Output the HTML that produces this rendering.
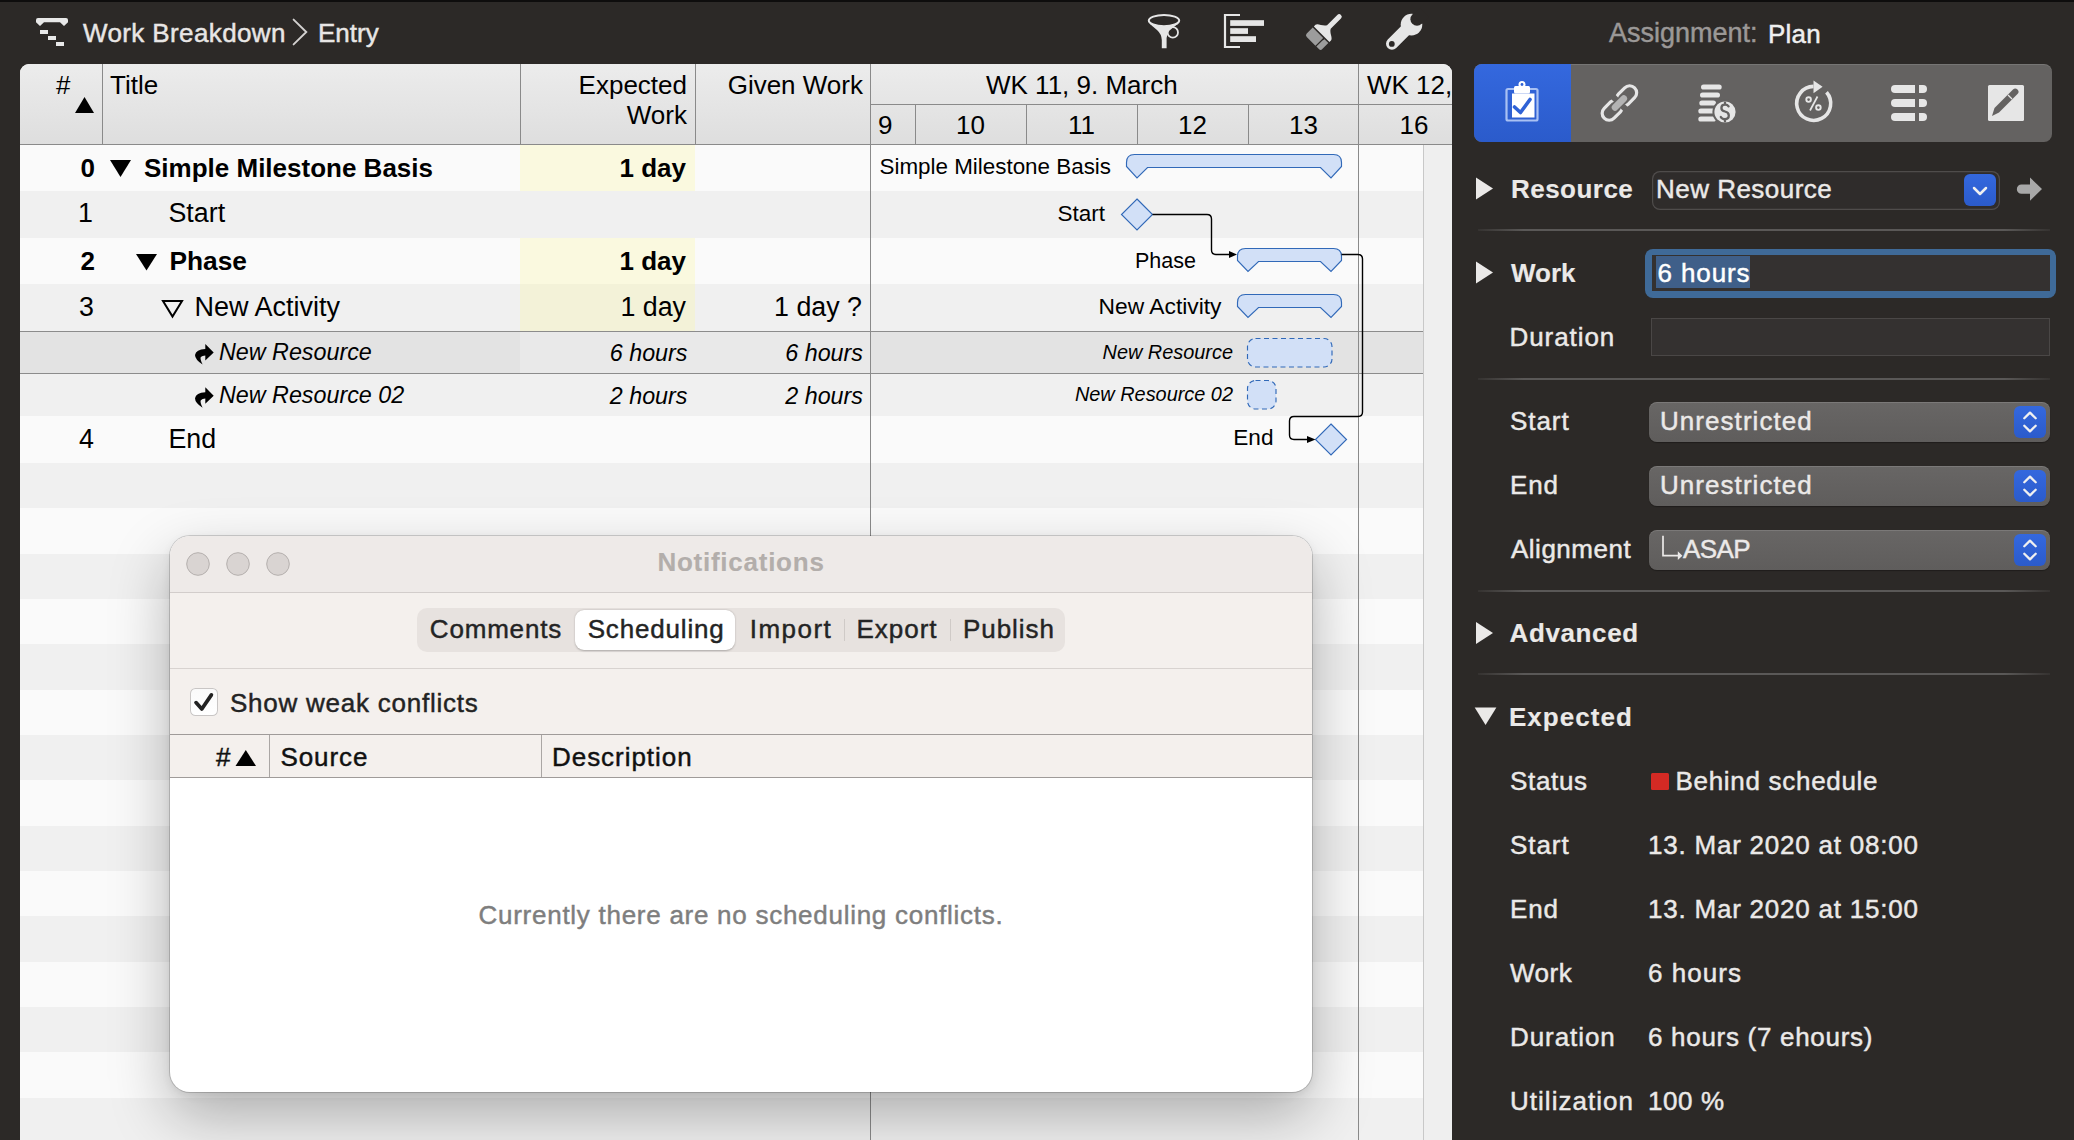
<!DOCTYPE html><html><head><meta charset="utf-8"><style>
html,body{margin:0;padding:0;}
body{width:2074px;height:1140px;overflow:hidden;position:relative;background:#2c2927;font-family:"Liberation Sans", sans-serif;}
.t{position:absolute;white-space:nowrap;}
.r{position:absolute;}
svg{position:absolute;overflow:visible;}
</style></head><body>
<div class="r" style="left:0px;top:0px;width:2074px;height:2px;background:#0e0d0d;"></div>
<svg style="left:0;top:0" width="2074" height="64">
<path d="M36 20 Q36 18 38 18 H66 Q68 18 68 20 V22.3 L64 26 L60 22.2 H44 L40 26 L36 22.3 Z" fill="#e8e8e8"/>
<rect x="40" y="30" width="8" height="4" fill="#e8e8e8"/>
<rect x="48" y="36" width="8" height="4" fill="#e8e8e8"/>
<rect x="56" y="42" width="8" height="4" fill="#e8e8e8"/>
</svg>
<div class="t" style="left:83px;top:20.49px;font-size:26px;line-height:26px;color:#e8e6e5;font-weight:normal;font-style:normal;letter-spacing:0.38px;-webkit-text-stroke:0.45px #e8e6e5;">Work Breakdown</div>
<svg style="left:0;top:0" width="2074" height="64"><path d="M293.6 19.6 L306.3 32 L293.6 44.4" stroke="#d3d1d0" stroke-width="1.9" fill="none" stroke-linecap="round"/></svg>
<div class="t" style="left:318px;top:20.49px;font-size:26px;line-height:26px;color:#e8e6e5;font-weight:normal;font-style:normal;-webkit-text-stroke:0.45px #e8e6e5;">Entry</div>
<svg style="left:0;top:0" width="2074" height="64">
<!-- funnel -->
<ellipse cx="1164" cy="20.6" rx="15.2" ry="5.6" fill="none" stroke="#e6e6e6" stroke-width="2"/>
<path d="M1149.5 23.5 Q1152 26 1157 30 Q1161.5 34 1161.8 40 V48.2 H1166.6 V38 Q1167 34 1169 31 Q1175 25.5 1178.8 23.5 Q1164 28.5 1149.5 23.5 Z" fill="#e6e6e6"/>
<circle cx="1172.8" cy="32.4" r="5.2" fill="none" stroke="#e6e6e6" stroke-width="1.8"/>
<!-- gantt -->
<path d="M1240 15 H1225 V47 H1240" fill="none" stroke="#e6e6e6" stroke-width="2.2"/>
<rect x="1230.2" y="20.2" width="33.8" height="5.7" fill="#e6e6e6"/>
<rect x="1230.2" y="28.2" width="17.8" height="5.7" fill="#e6e6e6"/>
<rect x="1230.2" y="36.2" width="25.8" height="5.8" fill="#e6e6e6"/>
<!-- brush -->
<g transform="translate(1321.1 34.75) rotate(45)">
<path d="M-11 -0.8 H11 V-3 C11 -6 4.5 -7 2.6 -11 V-25.5 A2.6 2.6 0 0 0 -2.6 -25.5 V-11 C-4.5 -7 -11 -6 -11 -3 Z" fill="#e6e6e6"/>
<path d="M-11 0.8 H3.7 V11.7 H-8.6 Q-11 11.7 -11 9.3 Z" fill="#9c9c9c"/>
<path d="M5 3 L5.6 0.8 H11 V9.3 Q11 11.7 8.6 11.7 H5 Z" fill="#9c9c9c"/>
</g>
<!-- wrench -->
<line x1="1392" y1="43.7" x2="1408" y2="27.8" stroke="#e6e6e6" stroke-width="12" stroke-linecap="round"/>
<circle cx="1411.5" cy="24.6" r="10.8" fill="#e6e6e6"/>
<circle cx="1417" cy="19.2" r="6.6" fill="#2c2927"/>
<path d="M1413 15 L1420 8 L1429 17 L1422 24 Z" fill="#2c2927"/>
<circle cx="1391.8" cy="43.9" r="2.9" fill="#2c2927"/>
</svg>
<div class="t" style="left:1609px;top:20.14px;font-size:27px;line-height:27px;color:#9b9897;font-weight:normal;font-style:normal;-webkit-text-stroke:0.45px #9b9897;">Assignment:</div>
<div class="t" style="left:1768px;top:20.99px;font-size:26px;line-height:26px;color:#efefef;font-weight:normal;font-style:normal;letter-spacing:0.2px;-webkit-text-stroke:0.45px #efefef;">Plan</div>
<div class="r" style="left:20px;top:64px;width:1432px;height:1096px;background:#fafafa;border-radius:9px 9px 0 0;overflow:hidden">
<div class="r" style="left:0;top:0;width:1432px;height:80px;background:linear-gradient(#ececec,#dedede)"></div>
<div class="r" style="left:0;top:80px;width:1432px;height:1px;background:#8a8a8a"></div>
</div>
<div class="r" style="left:20px;top:145.00px;width:1432px;height:46.00px;background:#fafafa"></div>
<div class="r" style="left:20px;top:191.00px;width:1432px;height:47.00px;background:#f0f0f0"></div>
<div class="r" style="left:20px;top:238.00px;width:1432px;height:46.00px;background:#fafafa"></div>
<div class="r" style="left:20px;top:284.00px;width:1432px;height:47.00px;background:#f0f0f0"></div>
<div class="r" style="left:20px;top:331.00px;width:1432px;height:43.00px;background:#e3e3e3"></div>
<div class="r" style="left:20px;top:374.00px;width:1432px;height:42.00px;background:#f0f0f0"></div>
<div class="r" style="left:20px;top:416.00px;width:1432px;height:47.00px;background:#fafafa"></div>
<div class="r" style="left:20px;top:463.00px;width:1432px;height:45.33px;background:#f0f0f0"></div>
<div class="r" style="left:20px;top:508.33px;width:1432px;height:45.33px;background:#fafafa"></div>
<div class="r" style="left:20px;top:553.66px;width:1432px;height:45.33px;background:#f0f0f0"></div>
<div class="r" style="left:20px;top:598.99px;width:1432px;height:45.33px;background:#fafafa"></div>
<div class="r" style="left:20px;top:644.32px;width:1432px;height:45.33px;background:#f0f0f0"></div>
<div class="r" style="left:20px;top:689.65px;width:1432px;height:45.33px;background:#fafafa"></div>
<div class="r" style="left:20px;top:734.98px;width:1432px;height:45.33px;background:#f0f0f0"></div>
<div class="r" style="left:20px;top:780.31px;width:1432px;height:45.33px;background:#fafafa"></div>
<div class="r" style="left:20px;top:825.64px;width:1432px;height:45.33px;background:#f0f0f0"></div>
<div class="r" style="left:20px;top:870.97px;width:1432px;height:45.33px;background:#fafafa"></div>
<div class="r" style="left:20px;top:916.30px;width:1432px;height:45.33px;background:#f0f0f0"></div>
<div class="r" style="left:20px;top:961.63px;width:1432px;height:45.33px;background:#fafafa"></div>
<div class="r" style="left:20px;top:1006.96px;width:1432px;height:45.33px;background:#f0f0f0"></div>
<div class="r" style="left:20px;top:1052.29px;width:1432px;height:45.33px;background:#fafafa"></div>
<div class="r" style="left:20px;top:1097.62px;width:1432px;height:45.33px;background:#f0f0f0"></div>
<div class="r" style="left:520px;top:331px;width:350px;height:42px;background:#e9e9e9;"></div>
<div class="r" style="left:20px;top:331px;width:1403px;height:1px;background:#8c8c8c;"></div>
<div class="r" style="left:20px;top:373px;width:1403px;height:1px;background:#8c8c8c;"></div>
<div class="r" style="left:520px;top:145px;width:175px;height:46px;background:#faf9df"></div>
<div class="r" style="left:520px;top:238px;width:175px;height:46px;background:#faf9df"></div>
<div class="r" style="left:520px;top:284px;width:175px;height:47px;background:#f3f2d8"></div>
<div class="r" style="left:1423px;top:145px;width:29px;height:1000px;background:#efefef;"></div>
<div class="r" style="left:1423px;top:145px;width:1px;height:1000px;background:#c8c8c8;"></div>
<div class="r" style="left:102px;top:64px;width:1px;height:80px;background:#8a8a8a;"></div>
<div class="r" style="left:520px;top:64px;width:1px;height:80px;background:#8a8a8a;"></div>
<div class="r" style="left:695px;top:64px;width:1px;height:80px;background:#8a8a8a;"></div>
<div class="r" style="left:870px;top:64px;width:1px;height:80px;background:#8a8a8a;"></div>
<div class="r" style="left:1358px;top:64px;width:1px;height:80px;background:#8a8a8a;"></div>
<div class="r" style="left:870px;top:104px;width:582px;height:1px;background:#8a8a8a;"></div>
<div class="r" style="left:915px;top:104px;width:1px;height:40px;background:#8a8a8a;"></div>
<div class="r" style="left:1026px;top:104px;width:1px;height:40px;background:#8a8a8a;"></div>
<div class="r" style="left:1137px;top:104px;width:1px;height:40px;background:#8a8a8a;"></div>
<div class="r" style="left:1248px;top:104px;width:1px;height:40px;background:#8a8a8a;"></div>
<div class="r" style="left:870px;top:145px;width:1px;height:1000px;background:#8a8a8a;"></div>
<div class="r" style="left:1358px;top:145px;width:1px;height:1000px;background:#8a8a8a;"></div>
<div class="t" style="left:56px;top:71.99px;font-size:26px;line-height:26px;color:#000;font-weight:normal;font-style:normal;">#</div>
<svg style="left:0;top:0" width="2074" height="1140"><path d="M75 113 L84.5 97 L94 113 Z" fill="#000"/></svg>
<div class="t" style="left:110px;top:71.99px;font-size:26px;line-height:26px;color:#000;font-weight:normal;font-style:normal;">Title</div>
<div class="t" style="left:-513px;width:1200px;text-align:right;top:71.99px;font-size:26px;line-height:26px;color:#000;font-weight:normal;font-style:normal;">Expected</div>
<div class="t" style="left:-513px;width:1200px;text-align:right;top:101.99px;font-size:26px;line-height:26px;color:#000;font-weight:normal;font-style:normal;">Work</div>
<div class="t" style="left:-337px;width:1200px;text-align:right;top:71.99px;font-size:26px;line-height:26px;color:#000;font-weight:normal;font-style:normal;">Given Work</div>
<div class="t" style="left:986px;top:71.99px;font-size:26px;line-height:26px;color:#000;font-weight:normal;font-style:normal;">WK 11, 9. March</div>
<div class="t" style="left:1367px;top:71.99px;font-size:26px;line-height:26px;color:#000;font-weight:normal;font-style:normal;">WK 12,</div>
<div class="t" style="left:878px;top:111.99px;font-size:26px;line-height:26px;color:#000;font-weight:normal;font-style:normal;">9</div>
<div class="t" style="left:370.5px;width:1200px;text-align:center;top:111.99px;font-size:26px;line-height:26px;color:#000;font-weight:normal;font-style:normal;">10</div>
<div class="t" style="left:481.5px;width:1200px;text-align:center;top:111.99px;font-size:26px;line-height:26px;color:#000;font-weight:normal;font-style:normal;">11</div>
<div class="t" style="left:592.5px;width:1200px;text-align:center;top:111.99px;font-size:26px;line-height:26px;color:#000;font-weight:normal;font-style:normal;">12</div>
<div class="t" style="left:703.5px;width:1200px;text-align:center;top:111.99px;font-size:26px;line-height:26px;color:#000;font-weight:normal;font-style:normal;">13</div>
<div class="t" style="left:814px;width:1200px;text-align:center;top:111.99px;font-size:26px;line-height:26px;color:#000;font-weight:normal;font-style:normal;">16</div>
<div class="t" style="left:-1105px;width:1200px;text-align:right;top:154.99px;font-size:26px;line-height:26px;color:#000;font-weight:bold;font-style:normal;">0</div>
<svg style="left:0;top:0" width="2074" height="1140"><path d="M110 160 H131 L120.5 177 Z" fill="#000"/><path d="M136 254 H157 L146.5 270.5 Z" fill="#000"/><path d="M163 301 H182 L172.5 316.5 Z" fill="none" stroke="#000" stroke-width="2"/></svg>
<div class="t" style="left:144px;top:154.99px;font-size:26px;line-height:26px;color:#000;font-weight:bold;font-style:normal;">Simple Milestone Basis</div>
<div class="t" style="left:-514px;width:1200px;text-align:right;top:154.99px;font-size:26px;line-height:26px;color:#000;font-weight:bold;font-style:normal;">1 day</div>
<div class="t" style="left:-1107px;width:1200px;text-align:right;top:200.01px;font-size:26.8px;line-height:26.8px;color:#000;font-weight:normal;font-style:normal;">1</div>
<div class="t" style="left:168.5px;top:200.01px;font-size:26.8px;line-height:26.8px;color:#000;font-weight:normal;font-style:normal;">Start</div>
<div class="t" style="left:-1105px;width:1200px;text-align:right;top:248.29px;font-size:26px;line-height:26px;color:#000;font-weight:bold;font-style:normal;">2</div>
<div class="t" style="left:169.5px;top:248.04px;font-size:26.3px;line-height:26.3px;color:#000;font-weight:bold;font-style:normal;">Phase</div>
<div class="t" style="left:-514px;width:1200px;text-align:right;top:248.29px;font-size:26px;line-height:26px;color:#000;font-weight:bold;font-style:normal;">1 day</div>
<div class="t" style="left:-1106px;width:1200px;text-align:right;top:294.21px;font-size:26.8px;line-height:26.8px;color:#000;font-weight:normal;font-style:normal;">3</div>
<div class="t" style="left:194.5px;top:294.04px;font-size:27px;line-height:27px;color:#000;font-weight:normal;font-style:normal;">New Activity</div>
<div class="t" style="left:-514px;width:1200px;text-align:right;top:294.21px;font-size:26.8px;line-height:26.8px;color:#000;font-weight:normal;font-style:normal;">1 day</div>
<div class="t" style="left:-338px;width:1200px;text-align:right;top:294.21px;font-size:26.8px;line-height:26.8px;color:#000;font-weight:normal;font-style:normal;">1 day ?</div>
<div class="t" style="left:219px;top:340.98px;font-size:23.3px;line-height:23.3px;color:#000;font-weight:normal;font-style:italic;">New Resource</div>
<div class="t" style="left:-512.5px;width:1200px;text-align:right;top:341.58px;font-size:23.3px;line-height:23.3px;color:#000;font-weight:normal;font-style:italic;">6 hours</div>
<div class="t" style="left:-337px;width:1200px;text-align:right;top:341.58px;font-size:23.3px;line-height:23.3px;color:#000;font-weight:normal;font-style:italic;">6 hours</div>
<div class="t" style="left:219px;top:384.18px;font-size:23.3px;line-height:23.3px;color:#000;font-weight:normal;font-style:italic;">New Resource 02</div>
<div class="t" style="left:-512.5px;width:1200px;text-align:right;top:384.78px;font-size:23.3px;line-height:23.3px;color:#000;font-weight:normal;font-style:italic;">2 hours</div>
<div class="t" style="left:-337px;width:1200px;text-align:right;top:384.78px;font-size:23.3px;line-height:23.3px;color:#000;font-weight:normal;font-style:italic;">2 hours</div>
<div class="t" style="left:-1106px;width:1200px;text-align:right;top:425.71px;font-size:26.8px;line-height:26.8px;color:#000;font-weight:normal;font-style:normal;">4</div>
<div class="t" style="left:168.5px;top:425.71px;font-size:26.8px;line-height:26.8px;color:#000;font-weight:normal;font-style:normal;">End</div>
<svg style="left:0;top:0" width="2074" height="1140"><g transform="translate(0 0)"><path d="M213.7 352.5 L205.3 344.1 V349 Q196 349.5 195 355 Q195 359.5 202.6 364.6 Q199.8 358.8 200.8 357 Q202.3 355.4 205.3 355.4 V360.6 Z" fill="#000"/></g></svg>
<svg style="left:0;top:0" width="2074" height="1140"><g transform="translate(0 43.2)"><path d="M213.7 352.5 L205.3 344.1 V349 Q196 349.5 195 355 Q195 359.5 202.6 364.6 Q199.8 358.8 200.8 357 Q202.3 355.4 205.3 355.4 V360.6 Z" fill="#000"/></g></svg>
<div class="t" style="left:-89px;width:1200px;text-align:right;top:156.04px;font-size:22.4px;line-height:22.4px;color:#000;font-weight:normal;font-style:normal;">Simple Milestone Basis</div>
<div class="t" style="left:-95px;width:1200px;text-align:right;top:202.65px;font-size:22.5px;line-height:22.5px;color:#000;font-weight:normal;font-style:normal;">Start</div>
<div class="t" style="left:-4px;width:1200px;text-align:right;top:250.50px;font-size:21.5px;line-height:21.5px;color:#000;font-weight:normal;font-style:normal;">Phase</div>
<div class="t" style="left:21.5px;width:1200px;text-align:right;top:294.90px;font-size:22.8px;line-height:22.8px;color:#000;font-weight:normal;font-style:normal;">New Activity</div>
<div class="t" style="left:33px;width:1200px;text-align:right;top:342.55px;font-size:19.9px;line-height:19.9px;color:#000;font-weight:normal;font-style:italic;">New Resource</div>
<div class="t" style="left:33px;width:1200px;text-align:right;top:385.15px;font-size:19.9px;line-height:19.9px;color:#000;font-weight:normal;font-style:italic;">New Resource 02</div>
<div class="t" style="left:73.5px;width:1200px;text-align:right;top:427.17px;font-size:22.6px;line-height:22.6px;color:#000;font-weight:normal;font-style:normal;">End</div>
<svg style="left:0;top:0" width="2074" height="1140"><path d="M1134.5 154.5 H1333.5 Q1341.5 154.5 1341.5 162.5 V166.5 L1331.0 178 L1320.5 167.5 H1147.5 L1137.0 178 L1126.5 166.5 V162.5 Q1126.5 154.5 1134.5 154.5 Z" fill="#d2e0f7" stroke="#3169b8" stroke-width="1.15"/><path d="M1245.5 248.5 H1333.5 Q1341.5 248.5 1341.5 256.5 V260.5 L1331.0 271.5 L1320.5 261.5 H1258.5 L1248.0 271.5 L1237.5 260.5 V256.5 Q1237.5 248.5 1245.5 248.5 Z" fill="#d2e0f7" stroke="#3169b8" stroke-width="1.15"/><path d="M1245.5 294.5 H1333.5 Q1341.5 294.5 1341.5 302.5 V306.5 L1331.0 317.5 L1320.5 307.5 H1258.5 L1248.0 317.5 L1237.5 306.5 V302.5 Q1237.5 294.5 1245.5 294.5 Z" fill="#d2e0f7" stroke="#3169b8" stroke-width="1.15"/><path d="M1137 199 L1152.5 214.5 L1137 230 L1121.5 214.5 Z" fill="#d2e0f7" stroke="#3169b8" stroke-width="1.15"/><path d="M1331 424 L1346.5 439.5 L1331 455 L1315.5 439.5 Z" fill="#d2e0f7" stroke="#3169b8" stroke-width="1.15"/><rect x="1247.5" y="338.5" width="84.5" height="28.5" rx="8" fill="#d2e0f7" stroke="#3169b8" stroke-width="1.15" stroke-dasharray="5 3.5"/><rect x="1247.5" y="380.5" width="28.5" height="28.5" rx="8" fill="#d2e0f7" stroke="#3169b8" stroke-width="1.15" stroke-dasharray="5 3.5"/><path d="M1152.5 214.5 H1207 Q1211.5 214.5 1211.5 219 V250 Q1211.5 254.5 1216 254.5 H1230" fill="none" stroke="#000" stroke-width="1.4"/><path d="M1229 251 L1237 254.5 L1229 258 Z" fill="#000"/><path d="M1341.5 254.5 H1358 Q1362.5 254.5 1362.5 259 V412 Q1362.5 416.5 1358 416.5 H1294 Q1289.5 416.5 1289.5 421 V435 Q1289.5 439.5 1294 439.5 H1308" fill="none" stroke="#000" stroke-width="1.4"/><path d="M1307 436 L1315.5 439.5 L1307 443 Z" fill="#000"/></svg>
<div class="r" style="left:170px;top:536px;width:1142px;height:556px;border-radius:20px;box-shadow:0 0 0 1px rgba(0,0,0,0.16),0 24px 60px rgba(0,0,0,0.28),0 3px 10px rgba(0,0,0,0.08);overflow:hidden;background:#fff">
<div class="r" style="left:0;top:0;width:1142px;height:56px;background:#eeeae8"></div>
<div class="r" style="left:0;top:56px;width:1142px;height:1px;background:#d2cdcb"></div>
<div class="r" style="left:0;top:57px;width:1142px;height:185px;background:#f4f0ed"></div>
<div class="r" style="left:0;top:132px;width:1142px;height:1px;background:#d8d3d0"></div>
<div class="r" style="left:0;top:198px;width:1142px;height:1px;background:#9f9b99"></div>
<div class="r" style="left:0;top:241px;width:1142px;height:1px;background:#9f9b99"></div>
<div class="r" style="left:99px;top:199px;width:1px;height:42px;background:#aaa6a4"></div>
<div class="r" style="left:371px;top:199px;width:1px;height:42px;background:#aaa6a4"></div>
</div>
<svg style="left:0;top:0" width="2074" height="1140"><circle cx="198" cy="564" r="11.3" fill="#d9d4d2" stroke="#b5b0ae" stroke-width="1"/><circle cx="238" cy="564" r="11.3" fill="#d9d4d2" stroke="#b5b0ae" stroke-width="1"/><circle cx="278" cy="564" r="11.3" fill="#d9d4d2" stroke="#b5b0ae" stroke-width="1"/></svg>
<div class="t" style="left:141px;width:1200px;text-align:center;top:549.49px;font-size:26px;line-height:26px;color:#b3aeab;font-weight:bold;font-style:normal;letter-spacing:0.75px;-webkit-text-stroke:0.14px #b3aeab;">Notifications</div>
<div class="r" style="left:417px;top:608px;width:648px;height:44px;background:#e7e2df;border-radius:10px;"></div>
<div class="r" style="left:575px;top:610px;width:160px;height:40px;background:#ffffff;border-radius:9px;box-shadow:0 0.5px 2px rgba(0,0,0,0.25);"></div>
<div class="r" style="left:844px;top:619px;width:1px;height:22px;background:#cfcac7;"></div>
<div class="r" style="left:950px;top:619px;width:1px;height:22px;background:#cfcac7;"></div>
<div class="t" style="left:-104.09500000000003px;width:1200px;text-align:center;top:616.19px;font-size:26px;line-height:26px;color:#242424;font-weight:normal;font-style:normal;letter-spacing:0.81px;-webkit-text-stroke:0.45px #242424;">Comments</div>
<div class="t" style="left:56.164999999999964px;width:1200px;text-align:center;top:616.19px;font-size:26px;line-height:26px;color:#242424;font-weight:normal;font-style:normal;letter-spacing:0.83px;-webkit-text-stroke:0.45px #242424;">Scheduling</div>
<div class="t" style="left:191.0px;width:1200px;text-align:center;top:616.19px;font-size:26px;line-height:26px;color:#242424;font-weight:normal;font-style:normal;letter-spacing:1.5px;-webkit-text-stroke:0.45px #242424;">Import</div>
<div class="t" style="left:297.0px;width:1200px;text-align:center;top:616.19px;font-size:26px;line-height:26px;color:#242424;font-weight:normal;font-style:normal;letter-spacing:1.0px;-webkit-text-stroke:0.45px #242424;">Export</div>
<div class="t" style="left:408.99px;width:1200px;text-align:center;top:616.19px;font-size:26px;line-height:26px;color:#242424;font-weight:normal;font-style:normal;letter-spacing:0.98px;-webkit-text-stroke:0.45px #242424;">Publish</div>
<div class="r" style="left:190.2px;top:688.1px;width:27.4px;height:27.5px;background:linear-gradient(#fafafa,#ffffff);border-radius:5.5px;box-shadow:inset 0 0 0 1px #c9c6c5;"></div>
<svg style="left:0;top:0" width="2074" height="1140"><path d="M196 702.6 L201.8 709 L211.4 694.9" fill="none" stroke="#222222" stroke-width="3.7" stroke-linecap="round" stroke-linejoin="round"/></svg>
<div class="t" style="left:230px;top:690.09px;font-size:26px;line-height:26px;color:#232323;font-weight:normal;font-style:normal;letter-spacing:0.76px;-webkit-text-stroke:0.45px #232323;">Show weak conflicts</div>
<div class="t" style="left:-969.5px;width:1200px;text-align:right;top:743.79px;font-size:26px;line-height:26px;color:#111;font-weight:normal;font-style:normal;-webkit-text-stroke:0.45px #111;">#</div>
<svg style="left:0;top:0" width="2074" height="1140"><path d="M235.5 766 L245.8 750 L256 766 Z" fill="#000"/></svg>
<div class="t" style="left:280.5px;top:743.79px;font-size:26px;line-height:26px;color:#111;font-weight:normal;font-style:normal;letter-spacing:0.9px;-webkit-text-stroke:0.45px #111;">Source</div>
<div class="t" style="left:552px;top:743.79px;font-size:26px;line-height:26px;color:#111;font-weight:normal;font-style:normal;letter-spacing:0.96px;-webkit-text-stroke:0.45px #111;">Description</div>
<div class="t" style="left:141px;width:1200px;text-align:center;top:901.99px;font-size:26px;line-height:26px;color:#7e7e7e;font-weight:normal;font-style:normal;letter-spacing:0.73px;-webkit-text-stroke:0.45px #7e7e7e;">Currently there are no scheduling conflicts.</div>
<div class="r" style="left:1474px;top:64px;width:578px;height:78px;background:#646261;border-radius:8px;box-shadow:inset 0 1px 0 rgba(255,255,255,0.12);"></div>
<div class="r" style="left:1474px;top:64px;width:97px;height:78px;background:linear-gradient(#3468de,#2b5bcb);border-radius:8px 0 0 8px;"></div>
<svg style="left:0;top:0" width="2074" height="1140"><rect x="1506.5" y="89" width="31" height="31.5" rx="1.5" fill="none" stroke="#a9c1f3" stroke-width="2.2"/><rect x="1512" y="93.5" width="22.5" height="24" fill="#ffffff"/><rect x="1514" y="86" width="16" height="7.5" rx="1.5" fill="#ffffff"/><circle cx="1522" cy="84.5" r="3.5" fill="#ffffff"/><circle cx="1522" cy="84.5" r="1.4" fill="#2f62d6"/><path d="M1514.5 107 L1520.5 112.5 L1530 99.5" fill="none" stroke="#2f62d6" stroke-width="3.6" stroke-linecap="round" stroke-linejoin="round"/><g transform="translate(1619.4 103) rotate(-45)"><rect x="-21.5" y="-7" width="23" height="14" rx="7" fill="none" stroke="#e6e6e6" stroke-width="3.2"/><rect x="-1.5" y="-7" width="23" height="14" rx="7" fill="none" stroke="#e6e6e6" stroke-width="3.2"/><rect x="-3" y="-8.8" width="6" height="17.6" fill="#646261"/><rect x="-9.5" y="-3.3" width="19" height="6.6" rx="3.3" fill="#b3b3b3"/></g><rect x="1701" y="84.4" width="20.700000000000045" height="5.2" rx="2.6" fill="#e6e6e6"/><rect x="1700" y="92.4" width="20" height="5.2" rx="2.6" fill="#e6e6e6"/><rect x="1699.3" y="100.4" width="16.700000000000045" height="5.2" rx="2.6" fill="#e6e6e6"/><rect x="1698.3" y="108.4" width="17.700000000000045" height="5.2" rx="2.6" fill="#e6e6e6"/><rect x="1698.3" y="116.4" width="17.700000000000045" height="5.2" rx="2.6" fill="#e6e6e6"/><circle cx="1725" cy="112" r="12.6" fill="#646261"/><circle cx="1725" cy="112" r="10.6" fill="#e6e6e6"/><path d="M1728.6 106.3 Q1727.5 104.6 1725 104.6 Q1721.4 104.6 1721.4 107.9 Q1721.4 110.6 1725 111.5 Q1728.8 112.4 1728.8 115.6 Q1728.8 119.2 1725 119.2 Q1722 119.2 1720.8 117 M1725 102.6 V104.6 M1725 119.2 V121.4" fill="none" stroke="#646261" stroke-width="2.3" stroke-linecap="round"/><path d="M1813.5 86.4 A17 17 0 1 0 1826.5 92.2" fill="none" stroke="#e6e6e6" stroke-width="3.6"/><path d="M1813.5 80.5 L1822.6 86.8 L1813.5 93.2 Z" fill="#e6e6e6"/><circle cx="1808.6" cy="99.6" r="2.3" fill="none" stroke="#e6e6e6" stroke-width="1.9"/><circle cx="1818.4" cy="107.6" r="2.3" fill="none" stroke="#e6e6e6" stroke-width="1.9"/><path d="M1810 110.5 L1817.5 96.5" stroke="#e6e6e6" stroke-width="1.7"/><path d="M1895 85 H1915 V93 H1895 A4 4 0 0 1 1895 85 Z" fill="#e6e6e6"/><path d="M1919 85 H1923 A4 4 0 0 1 1923 93 H1919 Z" fill="#e6e6e6"/><path d="M1895 99 H1915 V107 H1895 A4 4 0 0 1 1895 99 Z" fill="#e6e6e6"/><path d="M1919 99 H1923 A4 4 0 0 1 1923 107 H1919 Z" fill="#e6e6e6"/><path d="M1895 113 H1915 V121 H1895 A4 4 0 0 1 1895 113 Z" fill="#e6e6e6"/><path d="M1919 113 H1923 A4 4 0 0 1 1923 121 H1919 Z" fill="#e6e6e6"/><rect x="1988" y="85" width="36" height="36" rx="1.5" fill="#e6e6e6"/><path d="M1992 116 L1994.5 108 L2013 89.5 A2.3 2.3 0 0 1 2017.5 94 L1999 112.5 Z" fill="#646261"/><path d="M2008 95 L2012 99" stroke="#e6e6e6" stroke-width="1.2"/></svg>
<svg style="left:0;top:0" width="2074" height="1140"><path d="M1476 177.5 L1493 188.5 L1476 199.5 Z" fill="#ebe9e8"/><path d="M1476 261.5 L1493 272.5 L1476 283.5 Z" fill="#ebe9e8"/><path d="M1476 622 L1493 633 L1476 644 Z" fill="#ebe9e8"/><path d="M1474.7 707.6 H1496.4 L1485.55 725 Z" fill="#ebe9e8"/></svg>
<div class="t" style="left:1511px;top:175.69px;font-size:26px;line-height:26px;color:#ebe9e8;font-weight:bold;font-style:normal;letter-spacing:0.47px;-webkit-text-stroke:0.14px #ebe9e8;">Resource</div>
<div class="t" style="left:1511px;top:259.99px;font-size:26px;line-height:26px;color:#ebe9e8;font-weight:bold;font-style:normal;-webkit-text-stroke:0.14px #ebe9e8;">Work</div>
<div class="t" style="left:1509.5px;top:323.99px;font-size:26px;line-height:26px;color:#ebe9e8;font-weight:normal;font-style:normal;letter-spacing:0.93px;-webkit-text-stroke:0.45px #ebe9e8;">Duration</div>
<div class="t" style="left:1510px;top:407.99px;font-size:26px;line-height:26px;color:#ebe9e8;font-weight:normal;font-style:normal;letter-spacing:0.93px;-webkit-text-stroke:0.45px #ebe9e8;">Start</div>
<div class="t" style="left:1510px;top:471.99px;font-size:26px;line-height:26px;color:#ebe9e8;font-weight:normal;font-style:normal;letter-spacing:0.8px;-webkit-text-stroke:0.45px #ebe9e8;">End</div>
<div class="t" style="left:1511px;top:535.99px;font-size:26px;line-height:26px;color:#ebe9e8;font-weight:normal;font-style:normal;letter-spacing:0.5px;-webkit-text-stroke:0.45px #ebe9e8;">Alignment</div>
<div class="t" style="left:1509.5px;top:619.99px;font-size:26px;line-height:26px;color:#ebe9e8;font-weight:bold;font-style:normal;letter-spacing:0.63px;-webkit-text-stroke:0.14px #ebe9e8;">Advanced</div>
<div class="t" style="left:1509px;top:703.99px;font-size:26px;line-height:26px;color:#ebe9e8;font-weight:bold;font-style:normal;letter-spacing:1.03px;-webkit-text-stroke:0.14px #ebe9e8;">Expected</div>
<div class="r" style="left:1478px;top:229px;width:572px;height:1.5px;background:linear-gradient(90deg,rgba(90,88,87,0.2),#5a5857 8%,#5a5857 92%,rgba(90,88,87,0.2));"></div>
<div class="r" style="left:1478px;top:378px;width:572px;height:1.5px;background:linear-gradient(90deg,rgba(90,88,87,0.2),#5a5857 8%,#5a5857 92%,rgba(90,88,87,0.2));"></div>
<div class="r" style="left:1478px;top:590px;width:572px;height:1.5px;background:linear-gradient(90deg,rgba(90,88,87,0.2),#5a5857 8%,#5a5857 92%,rgba(90,88,87,0.2));"></div>
<div class="r" style="left:1478px;top:673px;width:572px;height:1.5px;background:linear-gradient(90deg,rgba(90,88,87,0.2),#5a5857 8%,#5a5857 92%,rgba(90,88,87,0.2));"></div>
<div class="r" style="left:1651.5px;top:170.5px;width:348px;height:39px;background:#2f2c2b;border-radius:8px;box-shadow:inset 0 0 0 1.2px #4f4c4b;"></div>
<div class="t" style="left:1656px;top:175.99px;font-size:26px;line-height:26px;color:#ebe9e8;font-weight:normal;font-style:normal;letter-spacing:0.48px;-webkit-text-stroke:0.45px #ebe9e8;">New Resource</div>
<div class="r" style="left:1964px;top:174px;width:32px;height:32px;background:linear-gradient(#3468de,#2b5bcb);border-radius:6px;"></div>
<svg style="left:0;top:0" width="2074" height="1140"><path d="M1974 188 L1980 194 L1986 188" fill="none" stroke="#f0f0f0" stroke-width="2.5" stroke-linecap="round" stroke-linejoin="round"/><path d="M2021.5 184.5 H2030 V177.5 L2042 189 L2030 200.8 V193.8 H2021.5 A4.65 4.65 0 0 1 2021.5 184.5 Z" fill="#a8a8a8"/></svg>
<div class="r" style="left:1645px;top:248.5px;width:411px;height:49px;background:#3f6a98;border-radius:8px;"></div>
<div class="r" style="left:1651.5px;top:255px;width:398.5px;height:36px;background:#343130;"></div>
<div class="r" style="left:1655.5px;top:256px;width:94.5px;height:32px;background:#3f5f89;"></div>
<div class="t" style="left:1657.5px;top:260.49px;font-size:26px;line-height:26px;color:#ffffff;font-weight:normal;font-style:normal;letter-spacing:0.9px;-webkit-text-stroke:0.45px #ffffff;">6 hours</div>
<div class="r" style="left:1650.5px;top:317.5px;width:399.5px;height:38.5px;background:#343130;box-shadow:inset 0 0 0 1px #4a4746;"></div>
<div class="r" style="left:1649px;top:402px;width:401px;height:40px;background:linear-gradient(#686665,#5f5d5c);border-radius:8px;box-shadow:inset 0 1px 0 rgba(255,255,255,0.13),0 1px 1px rgba(0,0,0,0.3);"></div>
<div class="r" style="left:2014px;top:406px;width:32px;height:32px;background:linear-gradient(#3468de,#2b5bcb);border-radius:6px;"></div>
<svg style="left:0;top:0" width="2074" height="1140"><path d="M2024.3 418.2 L2030 412.6 L2035.7 418.2 M2024.3 425.8 L2030 431.4 L2035.7 425.8" fill="none" stroke="#f0f0f0" stroke-width="2.3" stroke-linecap="round" stroke-linejoin="round"/></svg>
<div class="t" style="left:1660px;top:407.99px;font-size:26px;line-height:26px;color:#ebe9e8;font-weight:normal;font-style:normal;letter-spacing:1.05px;-webkit-text-stroke:0.45px #ebe9e8;">Unrestricted</div>
<div class="r" style="left:1649px;top:466px;width:401px;height:40px;background:linear-gradient(#686665,#5f5d5c);border-radius:8px;box-shadow:inset 0 1px 0 rgba(255,255,255,0.13),0 1px 1px rgba(0,0,0,0.3);"></div>
<div class="r" style="left:2014px;top:470px;width:32px;height:32px;background:linear-gradient(#3468de,#2b5bcb);border-radius:6px;"></div>
<svg style="left:0;top:0" width="2074" height="1140"><path d="M2024.3 482.2 L2030 476.6 L2035.7 482.2 M2024.3 489.8 L2030 495.4 L2035.7 489.8" fill="none" stroke="#f0f0f0" stroke-width="2.3" stroke-linecap="round" stroke-linejoin="round"/></svg>
<div class="t" style="left:1660px;top:471.99px;font-size:26px;line-height:26px;color:#ebe9e8;font-weight:normal;font-style:normal;letter-spacing:1.05px;-webkit-text-stroke:0.45px #ebe9e8;">Unrestricted</div>
<div class="r" style="left:1649px;top:530px;width:401px;height:40px;background:linear-gradient(#686665,#5f5d5c);border-radius:8px;box-shadow:inset 0 1px 0 rgba(255,255,255,0.13),0 1px 1px rgba(0,0,0,0.3);"></div>
<div class="r" style="left:2014px;top:534px;width:32px;height:32px;background:linear-gradient(#3468de,#2b5bcb);border-radius:6px;"></div>
<svg style="left:0;top:0" width="2074" height="1140"><path d="M2024.3 546.2 L2030 540.6 L2035.7 546.2 M2024.3 553.8 L2030 559.4 L2035.7 553.8" fill="none" stroke="#f0f0f0" stroke-width="2.3" stroke-linecap="round" stroke-linejoin="round"/></svg>
<div class="t" style="left:1683px;top:535.99px;font-size:26px;line-height:26px;color:#ebe9e8;font-weight:normal;font-style:normal;letter-spacing:-0.6px;-webkit-text-stroke:0.45px #ebe9e8;">ASAP</div>
<svg style="left:0;top:0" width="2074" height="1140"><path d="M1663 535.7 V555.7 H1679" fill="none" stroke="#ebe9e8" stroke-width="1.7"/><path d="M1677.8 551.2 L1682.4 555.7 L1677.8 560 Z" fill="#ebe9e8"/></svg>
<div class="t" style="left:1510px;top:767.99px;font-size:26px;line-height:26px;color:#ebe9e8;font-weight:normal;font-style:normal;letter-spacing:0.68px;-webkit-text-stroke:0.45px #ebe9e8;">Status</div>
<div class="r" style="left:1650.5px;top:772.5px;width:18px;height:17px;background:#d42a24;border-radius:1.5px;"></div>
<div class="t" style="left:1675.5px;top:767.99px;font-size:26px;line-height:26px;color:#ebe9e8;font-weight:normal;font-style:normal;letter-spacing:0.7px;-webkit-text-stroke:0.45px #ebe9e8;">Behind schedule</div>
<div class="t" style="left:1510px;top:831.99px;font-size:26px;line-height:26px;color:#ebe9e8;font-weight:normal;font-style:normal;letter-spacing:0.93px;-webkit-text-stroke:0.45px #ebe9e8;">Start</div>
<div class="t" style="left:1648px;top:831.99px;font-size:26px;line-height:26px;color:#ebe9e8;font-weight:normal;font-style:normal;letter-spacing:0.78px;-webkit-text-stroke:0.45px #ebe9e8;">13. Mar 2020 at 08:00</div>
<div class="t" style="left:1510px;top:895.99px;font-size:26px;line-height:26px;color:#ebe9e8;font-weight:normal;font-style:normal;letter-spacing:0.8px;-webkit-text-stroke:0.45px #ebe9e8;">End</div>
<div class="t" style="left:1648px;top:895.99px;font-size:26px;line-height:26px;color:#ebe9e8;font-weight:normal;font-style:normal;letter-spacing:0.78px;-webkit-text-stroke:0.45px #ebe9e8;">13. Mar 2020 at 15:00</div>
<div class="t" style="left:1510px;top:959.99px;font-size:26px;line-height:26px;color:#ebe9e8;font-weight:normal;font-style:normal;letter-spacing:0.5px;-webkit-text-stroke:0.45px #ebe9e8;">Work</div>
<div class="t" style="left:1648px;top:959.99px;font-size:26px;line-height:26px;color:#ebe9e8;font-weight:normal;font-style:normal;letter-spacing:1.03px;-webkit-text-stroke:0.45px #ebe9e8;">6 hours</div>
<div class="t" style="left:1510px;top:1023.99px;font-size:26px;line-height:26px;color:#ebe9e8;font-weight:normal;font-style:normal;letter-spacing:0.93px;-webkit-text-stroke:0.45px #ebe9e8;">Duration</div>
<div class="t" style="left:1648px;top:1023.99px;font-size:26px;line-height:26px;color:#ebe9e8;font-weight:normal;font-style:normal;letter-spacing:0.7px;-webkit-text-stroke:0.45px #ebe9e8;">6 hours (7 ehours)</div>
<div class="t" style="left:1510px;top:1087.99px;font-size:26px;line-height:26px;color:#ebe9e8;font-weight:normal;font-style:normal;letter-spacing:1.03px;-webkit-text-stroke:0.45px #ebe9e8;">Utilization</div>
<div class="t" style="left:1648px;top:1087.99px;font-size:26px;line-height:26px;color:#ebe9e8;font-weight:normal;font-style:normal;letter-spacing:0.58px;-webkit-text-stroke:0.45px #ebe9e8;">100 %</div>
</body></html>
